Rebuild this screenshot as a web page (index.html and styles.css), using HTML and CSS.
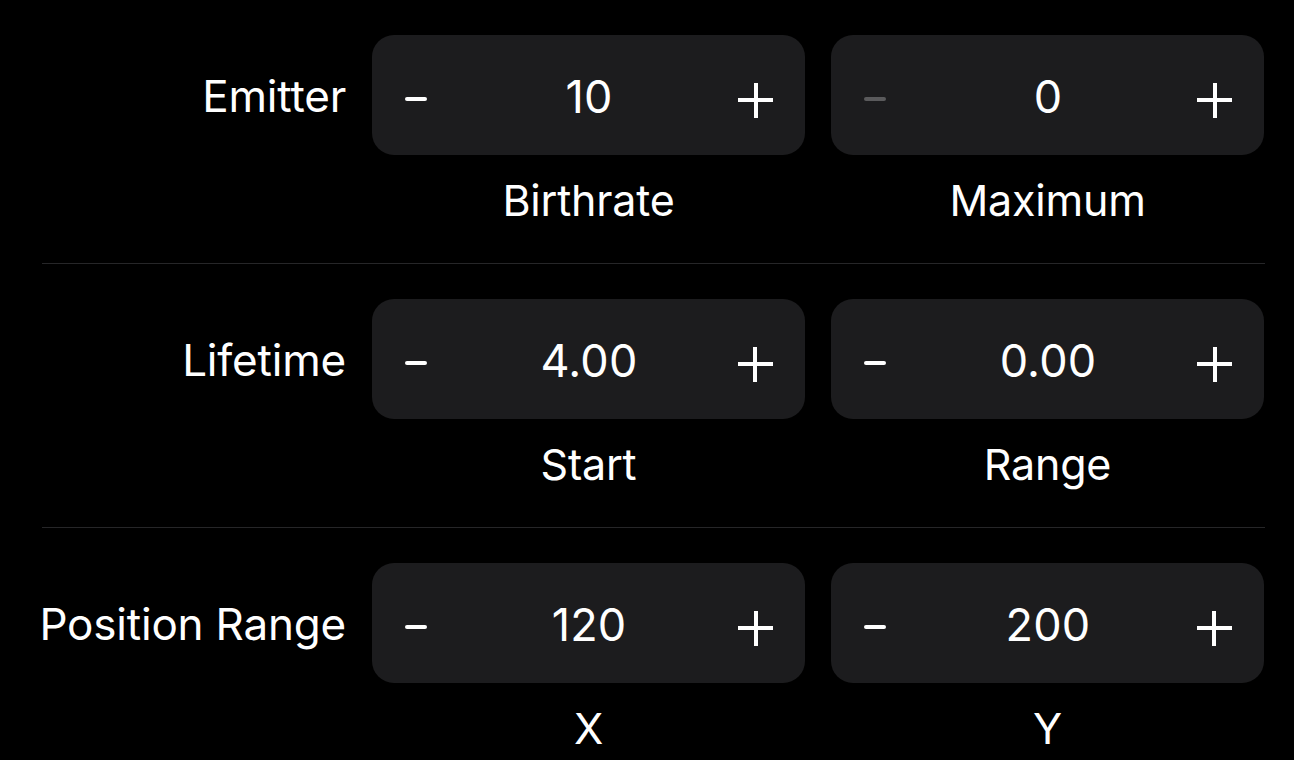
FILE: index.html
```html
<!DOCTYPE html>
<html lang="en">

<head>
    <meta charset="UTF-8">
    <meta name="viewport" content="width=device-width, initial-scale=1.0">
    <title>Emitter</title>
    <link rel="stylesheet" href="styles.css">
</head>

<body>
    <div class="list">
        <div class="row">
            <div class="label">Emitter</div>
            <div class="stepper left">
                <span class="minus"></span>
                <span class="value">10</span>
                <span class="plus"></span>
            </div>
            <div class="stepper right">
                <span class="minus off"></span>
                <span class="value">0</span>
                <span class="plus"></span>
            </div>
            <div class="sub left">Birthrate</div>
            <div class="sub right">Maximum</div>
        </div>
        <div class="row">
            <div class="label">Lifetime</div>
            <div class="stepper left">
                <span class="minus"></span>
                <span class="value">4.00</span>
                <span class="plus"></span>
            </div>
            <div class="stepper right">
                <span class="minus"></span>
                <span class="value">0.00</span>
                <span class="plus"></span>
            </div>
            <div class="sub left">Start</div>
            <div class="sub right">Range</div>
        </div>
        <div class="row">
            <div class="label">Position Range</div>
            <div class="stepper left">
                <span class="minus"></span>
                <span class="value">120</span>
                <span class="plus"></span>
            </div>
            <div class="stepper right">
                <span class="minus"></span>
                <span class="value">200</span>
                <span class="plus"></span>
            </div>
            <div class="sub left">X</div>
            <div class="sub right">Y</div>
        </div>
    </div>
</body>

</html>
```

FILE: styles.css
```css
body {
    margin: 0;
    background: #000;
    color: #fff;
    font-family: Inter, "Liberation Sans", sans-serif;
    overflow: hidden;
}

.list {
    margin-top: -1px;
    padding: 0 29px 0 42px;
}

.row {
    display: grid;
    grid-template-columns: 304px 433px 433px;
    grid-template-rows: 120px auto;
    column-gap: 26px;
    height: 228px;
    padding-top: 35px;
    border-top: 1px solid #262628;
}

.label {
    grid-column: 1;
    grid-row: 1;
    align-self: center;
    justify-self: end;
    white-space: nowrap;
    font-size: 44px;
    letter-spacing: -0.2px;
    padding-top: 2px;
}

.stepper {
    grid-row: 1;
    background: #1c1c1e;
    border-radius: 22px;
    display: flex;
    align-items: center;
    justify-content: space-between;
    padding: 0 32px 0 33px;
}

.left {
    grid-column: 2;
}

.right {
    grid-column: 3;
}

.value {
    font-size: 45px;
    letter-spacing: 0.2px;
    padding-top: 2px;
}

.minus {
    width: 22px;
    height: 4px;
    border-radius: 2px;
    background: #fff;
    margin-top: 8px;
    margin-right: 13px;
}

.minus.off {
    background: #5a5a5c;
}

.plus {
    width: 35px;
    height: 35px;
    margin-top: 10px;
    background:
        linear-gradient(#fff, #fff) center / 35px 4px no-repeat,
        linear-gradient(#fff, #fff) center / 4px 35px no-repeat;
}

.sub {
    grid-row: 2;
    text-align: center;
    font-size: 43px;
    letter-spacing: -0.2px;
    line-height: 1.21;
    padding-top: 19px;
}
```
